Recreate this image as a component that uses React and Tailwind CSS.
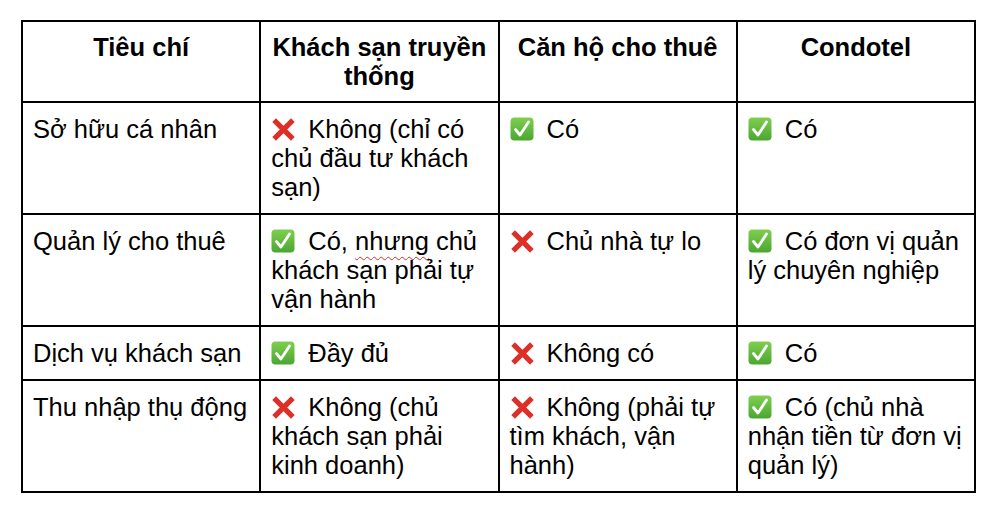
import React from 'react'

const Cross = () => (
  <svg viewBox="0 0 24 24" className="inline-block w-[25px] h-[25px] align-[-4px] mr-[12px]">
    <path d="M3 3 L21 21 M21 3 L3 21" stroke="#dd2e27" strokeWidth="5" strokeLinecap="butt" />
  </svg>
)

const Check = () => (
  <svg viewBox="0 0 24 24" className="inline-block w-[24px] h-[24px] align-[-3px] mr-[13px]">
    <defs>
      <linearGradient id="g" x1="0" y1="0" x2="0" y2="1">
        <stop offset="0" stopColor="#7fcf4e" />
        <stop offset="1" stopColor="#4aa632" />
      </linearGradient>
    </defs>
    <rect x="0.5" y="0.5" width="23" height="23" rx="4" fill="url(#g)" />
    <path d="M5.5 12.5 L10 18 L18.5 5" fill="none" stroke="#fff" strokeWidth="2.8" strokeLinecap="round" strokeLinejoin="round" />
  </svg>
)

const rows = [
  {
    name: 'Sở hữu cá nhân',
    cells: [
      [<Cross />, 'Không (chỉ có chủ đầu tư khách sạn)'],
      [<Check />, 'Có'],
      [<Check />, 'Có'],
    ],
  },
  {
    name: 'Quản lý cho thuê',
    cells: [
      [<Check />, <>Có, <span className="underline decoration-wavy decoration-[#d93025] decoration-1 underline-offset-[6px]">nhưng</span> chủ khách sạn phải tự vận hành</>],
      [<Cross />, 'Chủ nhà tự lo'],
      [<Check />, 'Có đơn vị quản lý chuyên nghiệp'],
    ],
  },
  {
    name: 'Dịch vụ khách sạn',
    cells: [
      [<Check />, 'Đầy đủ'],
      [<Cross />, 'Không có'],
      [<Check />, 'Có'],
    ],
  },
  {
    name: 'Thu nhập thụ động',
    cells: [
      [<Cross />, 'Không (chủ khách sạn phải kinh doanh)'],
      [<Cross />, 'Không (phải tự tìm khách, vận hành)'],
      [<Check />, 'Có (chủ nhà nhận tiền từ đơn vị quản lý)'],
    ],
  },
]

const heads = ['Tiêu chí', 'Khách sạn truyền thống', 'Căn hộ cho thuê', 'Condotel']

export default function App() {
  return (
    <div className="w-[990px] h-[512px] bg-white pt-[20px] pl-[21px] font-['Liberation_Sans',Arial,sans-serif] text-[25.5px] leading-[29px] text-black">
      <table className="w-[955px] table-fixed border-collapse">
        <thead>
          <tr>
            {heads.map((h) => (
              <th key={h} className="border-2 border-black px-[10px] pt-[11px] pb-[10px] font-bold text-center align-top">
                {h}
              </th>
            ))}
          </tr>
        </thead>
        <tbody>
          {rows.map((r) => (
            <tr key={r.name}>
              <td className="border-2 border-black px-[10px] pt-[12px] pb-[11px] align-top">{r.name}</td>
              {r.cells.map((c, i) => (
                <td key={i} className="border-2 border-black pl-[10px] pr-[8px] pt-[12px] pb-[11px] align-top">
                  {c[0]}
                  {c[1]}
                </td>
              ))}
            </tr>
          ))}
        </tbody>
      </table>
    </div>
  )
}
